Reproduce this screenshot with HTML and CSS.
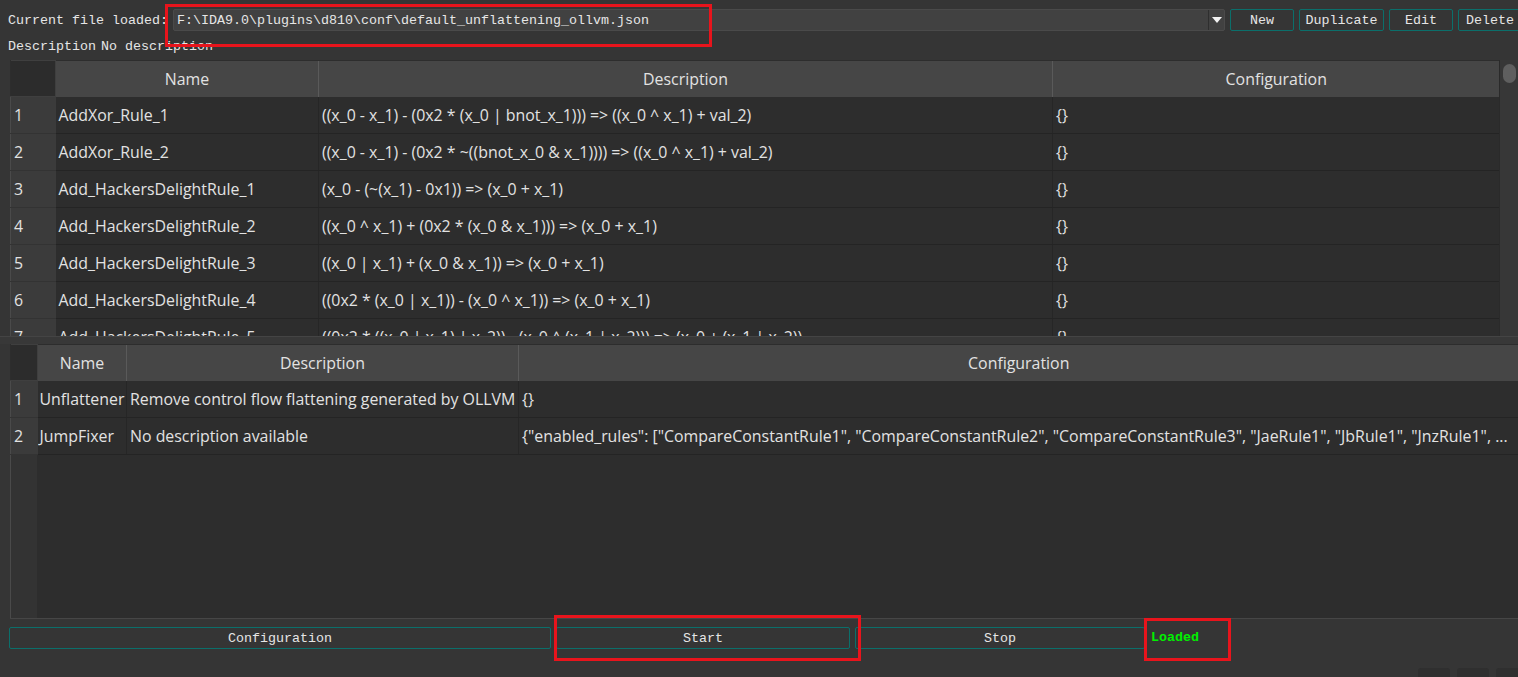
FILE: index.html
```html
<!DOCTYPE html>
<html>
<head>
<meta charset="utf-8">
<link rel="stylesheet" href="styles.css">
</head>
<body>
<div class="app">
  <div class="topbar">
    <span class="mono label">Current file loaded:</span>
    <div class="combo">
      <span class="mono combo-text">F:\IDA9.0\plugins\d810\conf\default_unflattening_ollvm.json</span>
      <span class="combo-arrow"><svg width="12" height="8" viewBox="0 0 12 8"><path d="M1 1 L11 1 L6 7 Z" fill="#f2f2f2"/></svg></span>
    </div>
    <button class="btn mono btn-new">New</button>
    <button class="btn mono btn-dup">Duplicate</button>
    <button class="btn mono btn-edit">Edit</button>
    <button class="btn mono btn-del">Delete</button>
  </div>
  <div class="descline mono"><span>Description</span><span class="descval">No description</span></div>

  <div class="rules-wrap">
    <div class="rules-view">
      <table class="grid rules">
        <colgroup><col class="c-idx"><col class="c-name"><col class="c-desc"><col class="c-conf"></colgroup>
        <thead><tr><th class="corner"></th><th>Name</th><th>Description</th><th>Configuration</th></tr></thead>
        <tbody>
          <tr><td class="idx">1</td><td>AddXor_Rule_1</td><td>((x_0 - x_1) - (0x2 * (x_0 | bnot_x_1))) =&gt; ((x_0 ^ x_1) + val_2)</td><td>{}</td></tr>
          <tr><td class="idx">2</td><td>AddXor_Rule_2</td><td>((x_0 - x_1) - (0x2 * ~((bnot_x_0 &amp; x_1)))) =&gt; ((x_0 ^ x_1) + val_2)</td><td>{}</td></tr>
          <tr><td class="idx">3</td><td>Add_HackersDelightRule_1</td><td>(x_0 - (~(x_1) - 0x1)) =&gt; (x_0 + x_1)</td><td>{}</td></tr>
          <tr><td class="idx">4</td><td>Add_HackersDelightRule_2</td><td>((x_0 ^ x_1) + (0x2 * (x_0 &amp; x_1))) =&gt; (x_0 + x_1)</td><td>{}</td></tr>
          <tr><td class="idx">5</td><td>Add_HackersDelightRule_3</td><td>((x_0 | x_1) + (x_0 &amp; x_1)) =&gt; (x_0 + x_1)</td><td>{}</td></tr>
          <tr><td class="idx">6</td><td>Add_HackersDelightRule_4</td><td>((0x2 * (x_0 | x_1)) - (x_0 ^ x_1)) =&gt; (x_0 + x_1)</td><td>{}</td></tr>
          <tr><td class="idx">7</td><td>Add_HackersDelightRule_5</td><td>((0x2 * ((x_0 | x_1) | x_2)) - (x_0 ^ (x_1 | x_2))) =&gt; (x_0 + (x_1 | x_2))</td><td>{}</td></tr>
        </tbody>
      </table>
    </div>
    <div class="vscroll"><div class="handle"></div></div>
  </div>

  <div class="splitter"></div>

  <div class="passes-view">
    <table class="grid passes">
      <colgroup><col class="p-idx"><col class="p-name"><col class="p-desc"><col class="p-conf"></colgroup>
      <thead><tr><th class="corner"></th><th>Name</th><th>Description</th><th>Configuration</th></tr></thead>
      <tbody>
        <tr><td class="idx">1</td><td>Unflattener</td><td>Remove control flow flattening generated by OLLVM</td><td>{}</td></tr>
        <tr><td class="idx">2</td><td>JumpFixer</td><td>No description available</td><td class="ellip">{"enabled_rules": ["CompareConstantRule1", "CompareConstantRule2", "CompareConstantRule3", "JaeRule1", "JbRule1", "JnzRule1", ...</td></tr>
      </tbody>
    </table>
    <div class="idx-fill"></div>
  </div>

  <div class="actions">
    <button class="btn mono act-conf">Configuration</button>
    <button class="btn mono act-start">Start</button>
    <button class="btn mono act-stop">Stop</button>
    <span class="status mono">Loaded</span>
  </div>

  <div class="tray">
    <span class="tray-box"></span><span class="tray-box"></span><span class="tray-box"></span>
  </div>

  <div class="mark mark-file"></div>
  <div class="mark mark-start"></div>
  <div class="mark mark-status"></div>
</div>
</body>
</html>
```

FILE: styles.css
```css
html, body {
  margin: 0;
  padding: 0;
  background: #353535;
  overflow: hidden;
}
.app {
  position: relative;
  width: 1518px;
  height: 677px;
  overflow: hidden;
  color: #e2e2e2;
  font-family: "Open Sans", "Noto Sans", sans-serif;
}
.mono {
  font-family: "Liberation Mono", "DejaVu Sans Mono", monospace;
  font-size: 13.33px;
  color: #e6e6e6;
}
.topbar {
  display: flex;
  align-items: center;
  height: 22px;
  padding: 9px 0 0 8px;
}
.label {
  width: 165px;
  flex: none;
  white-space: nowrap;
}
.combo {
  box-sizing: border-box;
  width: 1052px;
  height: 22px;
  margin-right: 5px;
  background: #414141;
  border: 1px solid #4a4a4a;
  border-radius: 2px;
  display: flex;
  align-items: center;
  flex: none;
}
.combo-text {
  flex: 1;
  padding-left: 3px;
  white-space: nowrap;
}
.combo-arrow {
  width: 15px;
  height: 20px;
  border-left: 1px solid #2e2e2e;
  display: flex;
  align-items: center;
  justify-content: center;
}
.btn {
  box-sizing: border-box;
  height: 22px;
  background: #353535;
  border: 1px solid #0b6f6b;
  border-radius: 2px;
  padding: 0;
  flex: none;
  cursor: default;
}
.topbar .btn { margin-right: 5px; }
.btn-new { width: 64px; }
.btn-dup { width: 85px; }
.btn-edit { width: 64px; }
.btn-del { width: 64px; }

.descline {
  display: flex;
  height: 16px;
  line-height: 16px;
  padding-left: 8px;
  margin-top: 8px;
  white-space: nowrap;
}
.descval { margin-left: 5px; }

.rules-wrap {
  display: flex;
  margin: 5px 0 0 10px;
  height: 276px;
  overflow: hidden;
}
.rules-view {
  width: 1489px;
  height: 276px;
  overflow: hidden;
  background: #2d2d2d;
}
.vscroll {
  width: 19px;
  height: 276px;
  background: #373737;
  border-left: 1px solid #2a2a2a;
  box-sizing: border-box;
  padding: 4px 2px 0 3px;
}
.handle {
  height: 19px;
  border-radius: 7px;
  background: #5f5f5f;
}

.grid {
  border-collapse: collapse;
  table-layout: fixed;
  font-size: 15.9px;
}
.grid th {
  height: 36px;
  padding: 0;
  background: #464646;
  font-weight: normal;
  color: #e2e2e2;
  border-left: 1px solid #5a5a5a;
  text-align: center;
  box-sizing: border-box;
}
.grid th.corner {
  background: #2c2c2c;
  border: 1px solid #3f3f3f;
  border-left: none;
}
.grid th:nth-child(2) { border-left: none; }
.grid td {
  height: 37px;
  padding: 0 0 0 3px;
  box-sizing: border-box;
  border-bottom: 1px solid #242424;
  border-left: 1px solid #262626;
  background: #2d2d2d;
  white-space: nowrap;
  overflow: hidden;
}
.grid td.idx {
  background: #3b3b3b;
  border-left: 1px solid #4a4a4a;
  border-bottom: 1px solid #333333;
  padding-left: 3px;
}
.grid td:nth-child(2) { border-left: none; }
.rules { width: 1489px; }
.c-idx { width: 45px; }
.c-name { width: 263px; }
.c-desc { width: 734px; }
.c-conf { width: 447px; }

.splitter {
  height: 8px;
  background: #383838;
  border-top: 1px solid #444444;
  box-sizing: border-box;
}

.passes-view {
  margin-left: 10px;
  width: 1508px;
  height: 275px;
  overflow: hidden;
  background: #2d2d2d;
  border-bottom: 1px solid #464646;
  box-sizing: border-box;
  display: flex;
  flex-direction: column;
}
.passes { width: 1508px; flex: none; }
.p-idx { width: 27px; }
.p-name { width: 89px; }
.p-desc { width: 392px; }
.p-conf { width: 1000px; }
.passes td:nth-child(2) { padding-left: 2px; }
.ellip { text-overflow: clip; }
.idx-fill {
  flex: 1;
  width: 27px;
  box-sizing: border-box;
  background: #333333;
  border-left: 1px solid #4a4a4a;
}

.actions {
  display: flex;
  align-items: center;
  gap: 5px;
  margin-top: 8px;
  padding-left: 9px;
  height: 22px;
}
.act-conf { width: 542px; }
.act-start { width: 294px; }
.act-stop { width: 290px; }
.status {
  color: #00f000;
  font-weight: bold;
  margin-left: 1px;
  margin-top: -1px;
}

.tray {
  display: flex;
  justify-content: flex-end;
  gap: 7px;
  margin-top: 19px;
}
.tray-box {
  width: 32px;
  height: 14px;
  background: #2f2f2f;
  border-radius: 3px;
}
.tray-box:last-child { width: 22px; border-radius: 3px 0 0 3px; }

.mark {
  position: absolute;
  border: 3px solid #e8141c;
  box-sizing: border-box;
}
.mark-file { left: 165px; top: 4px; width: 547px; height: 43px; }
.mark-start { left: 554px; top: 615px; width: 307px; height: 46px; }
.mark-status { left: 1144px; top: 618px; width: 87px; height: 43px; }
```
